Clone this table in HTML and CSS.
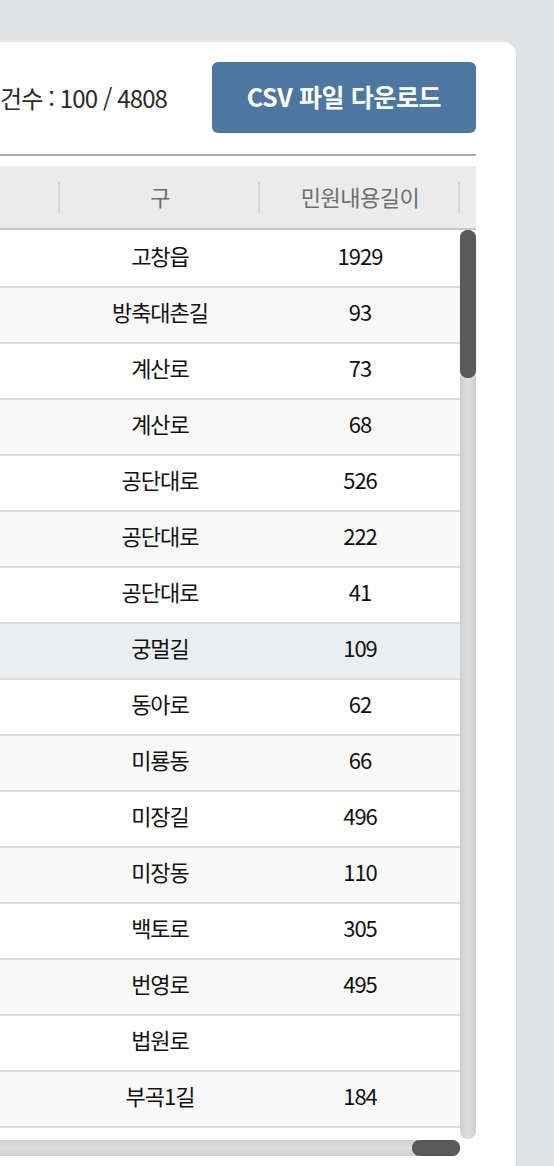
FILE: index.html
```html
<!DOCTYPE html>
<html lang="ko">
<head>
<meta charset="utf-8">
<title>민원 목록</title>
<link rel="stylesheet" href="styles.css">
</head>
<body>
<div class="card">
  <div class="toolbar">
    <div class="count">총 건수 : 100 / 4808</div>
    <button class="btn-csv" type="button">CSV 파일 다운로드</button>
  </div>
  <div class="divider"></div>
  <div class="grid">
    <div class="grid-head">
      <div class="hcell"></div>
      <div class="hcell">구</div>
      <div class="hcell">민원내용길이</div>
      <div class="hcorner"></div>
    </div>
    <div class="grid-body">
      <div class="rows">
        <div class="row"><div class="cell"></div><div class="cell">고창읍</div><div class="cell">1929</div></div>
        <div class="row alt"><div class="cell"></div><div class="cell">방축대촌길</div><div class="cell">93</div></div>
        <div class="row"><div class="cell"></div><div class="cell">계산로</div><div class="cell">73</div></div>
        <div class="row alt"><div class="cell"></div><div class="cell">계산로</div><div class="cell">68</div></div>
        <div class="row"><div class="cell"></div><div class="cell">공단대로</div><div class="cell">526</div></div>
        <div class="row alt"><div class="cell"></div><div class="cell">공단대로</div><div class="cell">222</div></div>
        <div class="row"><div class="cell"></div><div class="cell">공단대로</div><div class="cell">41</div></div>
        <div class="row hover"><div class="cell"></div><div class="cell">궁멀길</div><div class="cell">109</div></div>
        <div class="row"><div class="cell"></div><div class="cell">동아로</div><div class="cell">62</div></div>
        <div class="row alt"><div class="cell"></div><div class="cell">미룡동</div><div class="cell">66</div></div>
        <div class="row"><div class="cell"></div><div class="cell">미장길</div><div class="cell">496</div></div>
        <div class="row alt"><div class="cell"></div><div class="cell">미장동</div><div class="cell">110</div></div>
        <div class="row"><div class="cell"></div><div class="cell">백토로</div><div class="cell">305</div></div>
        <div class="row alt"><div class="cell"></div><div class="cell">번영로</div><div class="cell">495</div></div>
        <div class="row"><div class="cell"></div><div class="cell">법원로</div><div class="cell"></div></div>
        <div class="row alt"><div class="cell"></div><div class="cell">부곡1길</div><div class="cell">184</div></div>
        <div class="row"><div class="cell"></div><div class="cell"></div><div class="cell"></div></div>
      </div>
      <div class="vscroll"><div class="vthumb"></div></div>
    </div>
    <div class="grid-foot">
      <div class="hscroll"><div class="hthumb"></div></div>
      <div class="corner"></div>
    </div>
  </div>
</div>
</body>
</html>
```
FILE: styles.css
```css
html, body {
  margin: 0;
  padding: 0;
}
body {
  background: #e0e3e6;
  width: 554px;
  height: 1166px;
  overflow: hidden;
  font-family: "Noto Sans CJK KR", "Noto Sans", sans-serif;
}
.card {
  margin: 42px 38px 0 -260px;
  padding: 20px 40px 0 20px;
  background: #fff;
  border-radius: 12px 12px 0 0;
  height: 1200px;
  box-shadow: 1px 0 0 #d9dcdf;
}
.toolbar {
  display: flex;
  justify-content: flex-end;
  align-items: center;
  gap: 45px;
  height: 71px;
}
.count {
  font-size: 24px;
  color: #2a2a2a;
  letter-spacing: -0.9px;
  white-space: nowrap;
}
.btn-csv {
  width: 264px;
  height: 71px;
  border: 0;
  border-radius: 6px;
  background: #4b77a0;
  color: #fff;
  font-family: inherit;
  font-size: 25px;
  font-weight: 700;
  letter-spacing: -0.4px;
  padding: 0 0 4px;
}
.divider {
  margin-top: 21px;
  height: 2px;
  background: #abaeb1;
}
.grid {
  margin-top: 10px;
}
.grid-head {
  display: grid;
  grid-template-columns: 1fr 200px 200px 16px;
  height: 62px;
  background: #ebebeb;
  border-bottom: 2px solid #c5c8cb;
}
.hcell {
  position: relative;
  display: flex;
  align-items: center;
  justify-content: center;
  font-size: 22px;
  color: #6e6e6e;
  letter-spacing: -0.5px;
  padding-bottom: 2px;
}
.hcell::after {
  content: "";
  position: absolute;
  right: 0;
  top: 16px;
  width: 2px;
  height: 31px;
  background: #d6d6d6;
}
.grid-body {
  display: flex;
  height: 910px;
}
.rows {
  flex: 1;
  overflow: hidden;
  padding-top: 2px;
}
.row {
  display: grid;
  grid-template-columns: 1fr 200px 200px;
  height: 56px;
  box-sizing: border-box;
  border-bottom: 2px solid #dddddd;
  background: #fff;
}
.row.alt {
  background: #f9f9f9;
}
.row.hover {
  background: #eaeef0;
}
.cell {
  display: flex;
  align-items: center;
  justify-content: center;
  font-size: 22px;
  color: #111;
  letter-spacing: -1px;
  padding-bottom: 9px;
}
.vscroll {
  width: 16px;
  height: 909px;
  border-radius: 8px;
  background: linear-gradient(to right, #cecece, #e0e0e0 50%, #cecece);
}
.vthumb {
  height: 148px;
  border-radius: 8px;
  background: #5b5b5b;
  box-shadow: inset 0 0 2px #444;
}
.grid-foot {
  display: flex;
  height: 16px;
}
.hscroll {
  flex: 1;
  display: flex;
  justify-content: flex-end;
  border-radius: 8px;
  background: linear-gradient(to bottom, #cecece, #e0e0e0 50%, #cecece);
}
.hthumb {
  width: 48px;
  border-radius: 8px;
  background: #5b5b5b;
  box-shadow: inset 0 0 2px #444;
}
.corner {
  width: 16px;
}
```
